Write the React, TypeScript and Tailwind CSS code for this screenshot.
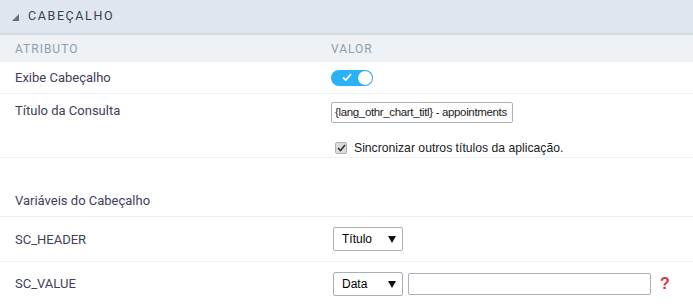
import React from "react";

export default function App() {
  return (
    <div className="w-[693px] h-[304px] overflow-hidden bg-white" style={{ fontFamily: "Roboto, 'Liberation Sans', Arial, sans-serif" }}>
      <div className="h-[35px] bg-[#e0e6ed] border-b-2 border-[#d2dae2] flex items-center pl-[12px]">
        <svg width="7" height="7" viewBox="0 0 7 7" className="mr-[9px] mt-[1px]">
          <polygon points="7,0 7,7 0,7" fill="#6b6b7b" />
        </svg>
        <span className="text-[12.5px] tracking-[1.6px] text-[#3d3d52]">CABEÇALHO</span>
      </div>
      <div className="h-[27px] bg-[#eef2f5] flex items-center text-[12px] tracking-[1px] text-[#8a9fb1]">
        <div className="w-[331px] pl-[15px]">ATRIBUTO</div>
        <div>VALOR</div>
      </div>
      <div className="h-[32px] flex items-center border-b border-[#eef0f4] text-[13px] text-[#40405a]">
        <div className="w-[331px] pl-[15px]">Exibe Cabeçalho</div>
        <div className="w-[42px] h-[16px] rounded-full bg-[#29b2f5] relative flex items-center">
          <svg width="10" height="9" viewBox="0 0 10 9" className="ml-[11px]">
            <path d="M1 4.5 L3.8 7.2 L9 1" stroke="white" strokeWidth="1.8" fill="none" />
          </svg>
          <div className="absolute right-[1px] top-[1px] w-[14px] h-[14px] rounded-full bg-white shadow-[0_0_1px_rgba(0,0,0,0.3)]" />
        </div>
      </div>
      <div className="h-[64px] flex border-b border-[#eef0f4] text-[13px] text-[#40405a]">
        <div className="w-[331px] pl-[15px] pt-[7px]">Título da Consulta</div>
        <div className="pt-[8px]">
          <div className="w-[182px] h-[21px] border border-[#a9aeb8] rounded-[2px] flex items-center px-[3px] overflow-hidden whitespace-nowrap text-[11.5px] tracking-[-0.35px] text-[#222]" style={{ fontFamily: "'Liberation Sans', Arial, sans-serif" }}>
            {"{lang_othr_chart_titl} - appointments"}
          </div>
          <div className="flex items-center mt-[16px] ml-[4px]">
            <div className="w-[12px] h-[12px] rounded-[2px] bg-[#dcdcdc] border border-[#b0b0b0] flex items-center justify-center">
              <svg width="9" height="8" viewBox="0 0 9 8">
                <path d="M1 4 L3.5 6.5 L8 1" stroke="#333" strokeWidth="1.6" fill="none" />
              </svg>
            </div>
            <span className="ml-[7px] text-[12.2px] text-[#222]" style={{ fontFamily: "'Liberation Sans', Arial, sans-serif" }}>Sincronizar outros títulos da aplicação.</span>
          </div>
        </div>
      </div>
      <div className="h-[59px] flex items-end pb-[6px] pl-[15px] border-b border-[#eef0f4] text-[13px] text-[#40405a]">
        Variáveis do Cabeçalho
      </div>
      <div className="h-[45px] flex items-center border-b border-[#eef0f4] text-[13px] text-[#40405a]">
        <div className="w-[333px] pl-[15px] pt-[2px]">SC_HEADER</div>
        <Select label="Título" />
      </div>
      <div className="h-[42px] flex items-center pt-[2px] text-[13px] text-[#40405a]">
        <div className="w-[333px] pl-[15px]">SC_VALUE</div>
        <Select label="Data" />
        <div className="ml-[5px] w-[243px] h-[22px] border border-[#a9aeb8] rounded-[2px]" />
        <span className="ml-[9px] text-[16px] font-bold text-[#e0313b]" style={{ fontFamily: "'Liberation Sans', Arial, sans-serif" }}>?</span>
      </div>
    </div>
  );
}

function Select({ label }: { label: string }) {
  return (
    <div className="w-[70px] h-[24px] border border-[#a9aeb8] rounded-[2px] flex items-center justify-between pl-[8px] pr-[6px] text-[12px] text-black" style={{ fontFamily: "'Liberation Sans', Arial, sans-serif" }}>
      <span>{label}</span>
      <svg width="8" height="7" viewBox="0 0 8 7">
        <polygon points="0,0 8,0 4,7" fill="#111" />
      </svg>
    </div>
  );
}
